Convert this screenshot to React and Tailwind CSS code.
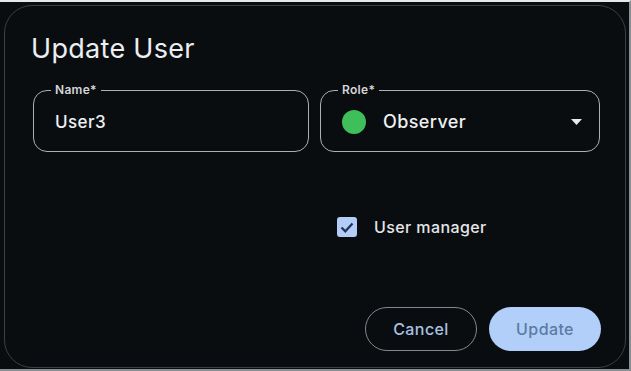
export default function App(){
  return (
    <div className="w-[631px] h-[371px] bg-[#0a0d10] border-t-2 border-t-[#e8e8e8] border-r-2 border-r-[#8a8f94] border-b-2 border-b-[#8a8f94] pt-[3px] pl-[4px] pr-[2px] pb-[1px]" style={{fontFamily:'Inter, "Noto Sans", sans-serif'}}>
      <div className="w-[622px] h-[363px] rounded-[28px] border border-[#3a4047] bg-[#0a0d10] pl-[26px] pr-[24px] pt-[25px] flex flex-col">
        <h1 className="text-[27px] leading-[36px] text-[#eceef0] font-normal tracking-[0.3px]">Update User</h1>
        <div className="mt-[23px] ml-[2px] flex gap-[11px]">
          <fieldset className="w-[276px] h-[68px] -mt-[6px] rounded-[14px] border border-[#aab0b6] px-[17px]">
            <legend className="px-[4px] text-[12px] font-semibold text-[#d3d6d9] leading-[12px] tracking-[0.3px]">Name*</legend>
            <div className="mt-[14px] ml-[4px] text-[17px] leading-[24px] font-medium text-[#eef0f2] tracking-[0.4px]">User3</div>
          </fieldset>
          <fieldset className="w-[280px] h-[68px] -mt-[6px] rounded-[14px] border border-[#aab0b6] pl-[21px] pr-[17px]">
            <legend className="-ml-[4px] px-[4px] text-[12px] font-semibold text-[#d3d6d9] leading-[12px] tracking-[0.3px]">Role*</legend>
            <div className="mt-[12px] flex items-center">
              <span className="w-[24px] h-[24px] rounded-full bg-[#3fbf5a]"></span>
              <span className="ml-[17px] text-[18px] font-medium text-[#eef0f2] tracking-[0.4px]">Observer</span>
              <svg className="ml-auto" width="11" height="6" viewBox="0 0 11 6"><path d="M0 0h11L5.5 6z" fill="#e8eaec"/></svg>
            </div>
          </fieldset>
        </div>
        <div className="mt-[63px] ml-[306px] flex items-center">
          <span className="w-[20px] h-[20px] rounded-[3px] bg-[#b3cdf8] flex items-center justify-center">
            <svg width="14" height="11" viewBox="0 0 14 11"><path d="M1.5 5.5l3.8 3.8L12.5 1.5" fill="none" stroke="#1d3558" strokeWidth="2.2"/></svg>
          </span>
          <span className="ml-[17px] text-[16px] font-medium text-[#e4e6e8] tracking-[0.4px]">User manager</span>
        </div>
        <div className="mt-auto mb-[16px] flex justify-end gap-[12px]">
          <button className="w-[112px] h-[44px] rounded-full border border-[#80878e] text-[16px] font-medium text-[#a9c1e0] tracking-[0.4px]">Cancel</button>
          <button className="w-[112px] h-[44px] rounded-full bg-[#b1cff9] text-[16px] font-medium text-[#5b7aa3] tracking-[0.4px]">Update</button>
        </div>
      </div>
    </div>
  )
}
